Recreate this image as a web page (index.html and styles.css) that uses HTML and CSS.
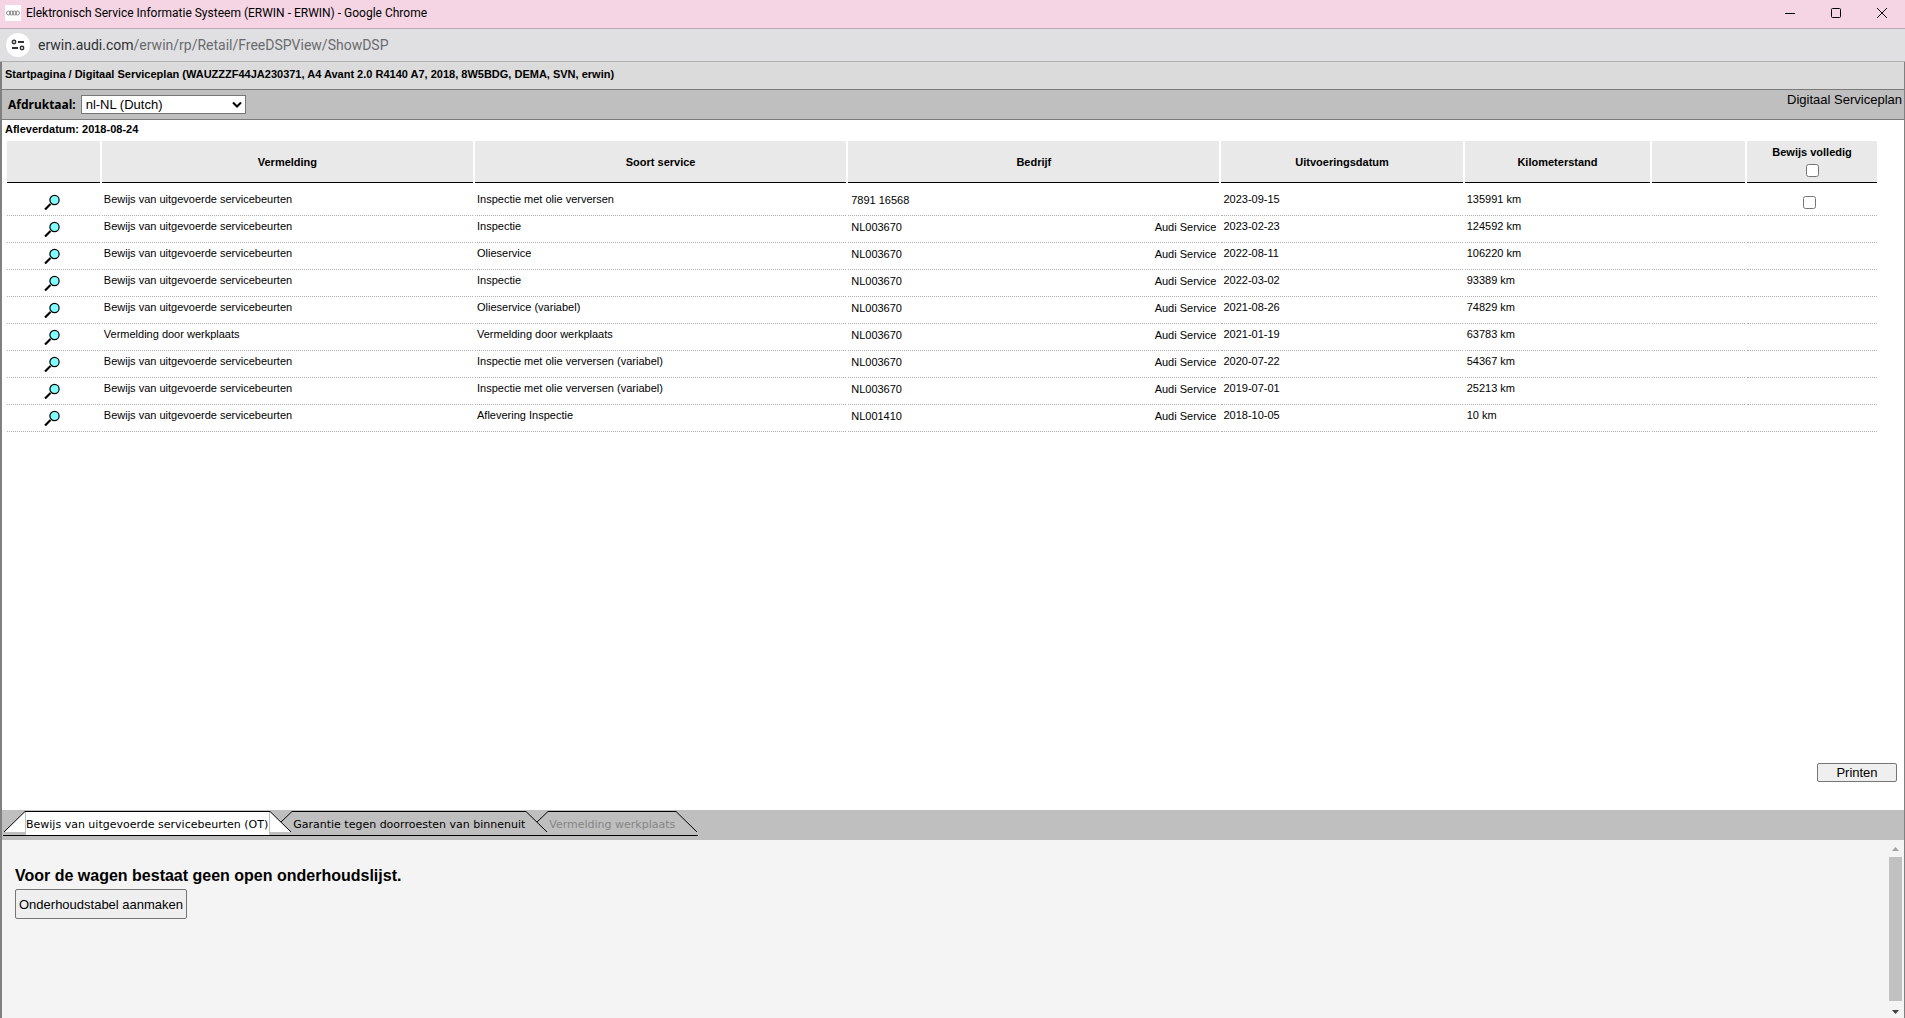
FILE: index.html
```html
<!DOCTYPE html>
<html lang="nl">
<head>
<meta charset="utf-8">
<title>Elektronisch Service Informatie Systeem (ERWIN - ERWIN)</title>
<link rel="stylesheet" href="styles.css">
</head>
<body>
<svg class="defs" aria-hidden="true">
  <symbol id="lens" viewBox="0 0 16 16">
    <path d="M1 15.500L6.500 10" stroke="#000" stroke-width="2.200" fill="none"/>
    <circle cx="10.500" cy="6" r="4.600" fill="#80ffff" stroke="#000" stroke-width="1.200"/>
  </symbol>
</svg>
<header class="titlebar">
  <svg class="favicon" width="16" height="16" viewBox="0 0 16 16"><path fill="#fff" d="M0 0h16v16H0z"/><g fill="none" stroke="#8a8a8a"><circle cx="3.500" cy="8" r="2"/><circle cx="6.500" cy="8" r="2"/><circle cx="9.500" cy="8" r="2"/><circle cx="12.500" cy="8" r="2"/></g></svg>
  <span class="window-title">Elektronisch Service Informatie Systeem (ERWIN - ERWIN) - Google Chrome</span>
  <div class="window-controls">
    <button type="button" aria-label="Minimaliseren"><svg width="12" height="12" viewBox="0 0 12 12"><path d="M1 6.500h10"/></svg></button>
    <button type="button" aria-label="Maximaliseren"><svg width="12" height="12" viewBox="0 0 12 12"><rect x="1.500" y="1.500" width="9" height="9" rx="1"/></svg></button>
    <button type="button" aria-label="Sluiten"><svg width="12" height="12" viewBox="0 0 12 12"><path d="M1 1l10 10M11 1L1 11"/></svg></button>
  </div>
</header>
<div class="addressbar">
  <button type="button" class="site-info" aria-label="Sitegegevens"><svg width="16" height="16" viewBox="0 0 16 16" fill="none" stroke="#333" stroke-width="2"><circle cx="4" cy="5" r="1.700" stroke-width="1.500"/><path d="M8 5h6M2 11h6"/><circle cx="12" cy="11" r="1.700" stroke-width="1.500"/></svg></button>
  <span class="url">erwin.audi.com<span class="path">/erwin/rp/Retail/FreeDSPView/ShowDSP</span></span>
</div>
<div class="page">
  <nav class="breadcrumb">Startpagina / Digitaal Serviceplan (WAUZZZF44JA230371, A4 Avant 2.0 R4140 A7, 2018, 8W5BDG, DEMA, SVN, erwin)</nav>
  <div class="toolbar">
    <label for="lang">Afdruktaal:</label>
    <div class="select-wrap">
      <select id="lang"><option>nl-NL (Dutch)</option></select>
      <svg class="chevron" width="10" height="8" viewBox="0 0 10 8"><path d="M1 1.500l4 4 4-4" fill="none" stroke="#000" stroke-width="2"/></svg>
    </div>
    <span class="page-name">Digitaal Serviceplan</span>
  </div>
  <main class="content">
    <div class="delivery">Afleverdatum: 2018-08-24</div>
    <table class="services">
      <colgroup><col class="c5"><col class="c20"><col class="c20"><col class="c20"><col class="c13"><col class="c10"><col class="c5"><col class="c7"></colgroup>
      <thead>
        <tr><th></th><th>Vermelding</th><th>Soort service</th><th>Bedrijf</th><th>Uitvoeringsdatum</th><th>Kilometerstand</th><th></th><th><label class="check-all">Bewijs volledig<input type="checkbox"></label></th></tr>
      </thead>
      <tbody>
        <tr><td class="icon"><svg><use href="#lens"/></svg></td><td>Bewijs van uitgevoerde servicebeurten</td><td>Inspectie met olie verversen</td><td><div class="company"><span>7891 16568</span></div></td><td>2023-09-15</td><td>135991 km</td><td></td><td class="pick"><input type="checkbox" aria-label="Selecteer 2023-09-15"></td></tr>
        <tr><td class="icon"><svg><use href="#lens"/></svg></td><td>Bewijs van uitgevoerde servicebeurten</td><td>Inspectie</td><td><div class="company"><span>NL003670</span><span>Audi Service</span></div></td><td>2023-02-23</td><td>124592 km</td><td></td><td></td></tr>
        <tr><td class="icon"><svg><use href="#lens"/></svg></td><td>Bewijs van uitgevoerde servicebeurten</td><td>Olieservice</td><td><div class="company"><span>NL003670</span><span>Audi Service</span></div></td><td>2022-08-11</td><td>106220 km</td><td></td><td></td></tr>
        <tr><td class="icon"><svg><use href="#lens"/></svg></td><td>Bewijs van uitgevoerde servicebeurten</td><td>Inspectie</td><td><div class="company"><span>NL003670</span><span>Audi Service</span></div></td><td>2022-03-02</td><td>93389 km</td><td></td><td></td></tr>
        <tr><td class="icon"><svg><use href="#lens"/></svg></td><td>Bewijs van uitgevoerde servicebeurten</td><td>Olieservice (variabel)</td><td><div class="company"><span>NL003670</span><span>Audi Service</span></div></td><td>2021-08-26</td><td>74829 km</td><td></td><td></td></tr>
        <tr><td class="icon"><svg><use href="#lens"/></svg></td><td>Vermelding door werkplaats</td><td>Vermelding door werkplaats</td><td><div class="company"><span>NL003670</span><span>Audi Service</span></div></td><td>2021-01-19</td><td>63783 km</td><td></td><td></td></tr>
        <tr><td class="icon"><svg><use href="#lens"/></svg></td><td>Bewijs van uitgevoerde servicebeurten</td><td>Inspectie met olie verversen (variabel)</td><td><div class="company"><span>NL003670</span><span>Audi Service</span></div></td><td>2020-07-22</td><td>54367 km</td><td></td><td></td></tr>
        <tr><td class="icon"><svg><use href="#lens"/></svg></td><td>Bewijs van uitgevoerde servicebeurten</td><td>Inspectie met olie verversen (variabel)</td><td><div class="company"><span>NL003670</span><span>Audi Service</span></div></td><td>2019-07-01</td><td>25213 km</td><td></td><td></td></tr>
        <tr><td class="icon"><svg><use href="#lens"/></svg></td><td>Bewijs van uitgevoerde servicebeurten</td><td>Aflevering Inspectie</td><td><div class="company"><span>NL001410</span><span>Audi Service</span></div></td><td>2018-10-05</td><td>10 km</td><td></td><td></td></tr>
      </tbody>
    </table>
    <div class="actions"><button type="button" class="print">Printen</button></div>
  </main>
  <div class="tabbar">
    <div class="tabs">
      <svg width="22" height="24" viewBox="0 0 22 24"><path d="M1 21L22 .5V21z" fill="#fff"/><path d="M1 21L22 .5" stroke="#000"/></svg>
      <button type="button" class="tab active">Bewijs van uitgevoerde servicebeurten (OT)</button>
      <svg width="22" height="24" viewBox="0 0 22 24"><path d="M0 .5L21 21H0z" fill="#fff"/><path d="M0 .5L21 21M11 11L22 .5" stroke="#000" fill="none"/></svg>
      <button type="button" class="tab">Garantie tegen doorroesten van binnenuit</button>
      <svg width="22" height="24" viewBox="0 0 22 24"><path d="M0 .5L21 21M11 11L22 .5" stroke="#000" fill="none"/></svg>
      <button type="button" class="tab" disabled>Vermelding werkplaats</button>
      <svg width="22" height="24" viewBox="0 0 22 24"><path d="M0 .5L21 21" stroke="#000"/></svg>
    </div>
  </div>
  <section class="panel">
    <div class="panel-body">
      <h1>Voor de wagen bestaat geen open onderhoudslijst.</h1>
      <button type="button" class="create">Onderhoudstabel aanmaken</button>
    </div>
    <div class="scrollbar" aria-hidden="true">
      <svg width="13" height="17" viewBox="0 0 13 17"><path d="M3 11l3.500-4L10 11z" fill="#a3a3a3"/></svg>
      <div class="thumb"></div>
      <svg width="13" height="17" viewBox="0 0 13 17"><path d="M3 9l3.500 4L10 9z" fill="#404040"/></svg>
    </div>
  </section>
</div>
</body>
</html>
```
FILE: styles.css
```css
* { box-sizing: border-box; }
body {
  margin: 0;
  min-height: 100vh;
  display: flex;
  flex-direction: column;
  font-family: "Liberation Sans", Arial, sans-serif;
  font-size: 11px;
  color: #000;
  background: #fff;
}
button, select { font-family: inherit; color: inherit; }
.defs { display: none; }
.titlebar {
  display: flex;
  align-items: center;
  height: 29px;
  padding: 0 0 2px 5px;
  background: #f5d5e4;
  border-bottom: 1px solid #b9a9b3;
}
.window-title { margin-left: 5px; font: 12px Roboto, sans-serif; }
.window-controls { display: flex; margin-left: auto; }
.window-controls button {
  width: 46px;
  height: 26px;
  padding: 0;
  border: 0;
  background: none;
  display: grid;
  place-items: center;
}
.window-controls svg { fill: none; stroke: #000; }
.addressbar {
  display: flex;
  align-items: center;
  gap: 8px;
  height: 33px;
  padding-left: 6px;
  background: #e0e0e3;
  border-bottom: 1px solid #b0b0b3;
}
.site-info {
  display: grid;
  place-items: center;
  width: 24px;
  height: 24px;
  padding: 0;
  border: 0;
  border-radius: 50%;
  background: #fff;
}
.url { font: 14px Roboto, sans-serif; color: #303134; }
.path { color: #6a6b6e; }
.page {
  flex: 1;
  display: flex;
  flex-direction: column;
  border: solid #808080;
  border-width: 0 1px 0 2px;
}
.breadcrumb {
  height: 27px;
  padding-left: 3px;
  line-height: 24px;
  font-weight: bold;
  background: #dbdbdb;
}
.toolbar {
  display: flex;
  align-items: center;
  height: 31px;
  padding: 0 2px 0 6px;
  gap: 5px;
  background: #bfbfbf;
  border: solid #7a7a7a;
  border-width: 1px 0;
}
.toolbar label { font: bold 12px "Noto Sans", sans-serif; }
.select-wrap { position: relative; }
.select-wrap select {
  display: block;
  appearance: none;
  width: 165px;
  height: 19px;
  padding: 0 20px 0 4px;
  border: 1px solid #767676;
  background: #fff;
  font-size: 13px;
}
.chevron { position: absolute; right: 4px; top: 6px; pointer-events: none; }
.page-name { margin-left: auto; align-self: flex-start; line-height: 19px; font-size: 13px; }
.content { flex: 1; display: flex; flex-direction: column; }
.delivery { padding: 0 0 2px 3px; line-height: 19px; font-weight: bold; }
.services {
  width: calc(100% - 28px);
  margin-left: 3px;
  table-layout: fixed;
  border-collapse: separate;
  border-spacing: 2px 0;
}
.c5 { width: 5%; }
.c7 { width: 7%; }
.c10 { width: 10%; }
.c13 { width: 13%; }
.c20 { width: 20%; }
.services th {
  height: 42px;
  padding: 0;
  background: #e9e9e9;
  border-bottom: 1px solid #000;
}
.check-all { display: flex; flex-direction: column; align-items: center; gap: 6px; line-height: 12px; }
.services input { display: block; width: 13px; height: 13px; margin: 0; }
.services td {
  height: 27px;
  padding: 4px 2px 0;
  vertical-align: top;
  line-height: 13px;
  border-bottom: 1px dotted #b0b0b0;
}
.services tbody tr:first-child td { height: 33px; padding-top: 10px; }
.services .icon { padding-right: 4px; }
.services .icon svg { display: block; width: 16px; height: 17px; padding-top: 1px; margin: 0 auto; }
.services .pick input { margin: 3px auto 0 54px; }
.company { display: flex; justify-content: space-between; padding: 1px 1px 0 1px; }
.actions { display: flex; justify-content: flex-end; margin-top: auto; padding: 0 7px 28px 0; }
.print, .create { border: 1px solid #767676; border-radius: 2px; background: #efefef; }
.print { width: 80px; height: 19px; padding: 0; font-size: 13px; }
.tabbar { display: flex; height: 30px; padding-top: 1px; background: #bfbfbf; }
.tabs { display: flex; height: 25px; margin-left: 1px; border-bottom: 1px solid #000; }
.tabs svg { flex: none; }
.tab {
  height: 24px;
  padding: 2px 1px 0;
  border: 0;
  border-top: 1px solid #000;
  background: none;
  font: 11px "DejaVu Sans", Verdana, sans-serif;
}
.tab.active { padding-right: 2px; background: #fff; box-shadow: inset 1px 0 #bfbfbf, inset -1px 0 #bfbfbf; }
.tab:disabled { color: #858585; }
.panel { display: flex; min-height: 178px; background: #f4f4f4; }
.panel-body { flex: 1; padding: 26px 13px; }
.panel h1 { margin: 0 0 3px; font-size: 16px; line-height: 20px; }
.create { height: 30px; padding: 0 3px; font-size: 13px; }
.scrollbar { display: flex; flex-direction: column; width: 15px; padding-right: 2px; }
.thumb { flex: 1; background: #c1c1c1; }
```
